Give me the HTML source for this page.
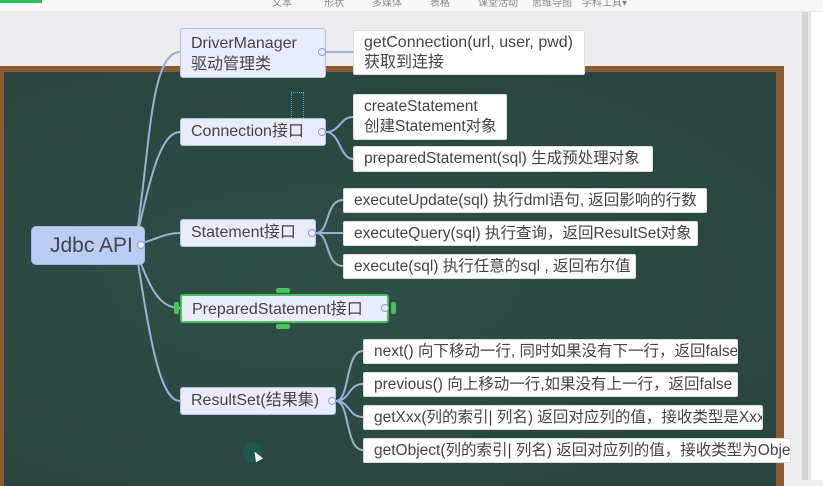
<!DOCTYPE html>
<html><head><meta charset="utf-8"><style>
*{margin:0;padding:0;box-sizing:border-box}
body{width:823px;height:480px;overflow:hidden;background:#ececee;position:relative;font-family:"Liberation Sans","Noto Sans CJK SC",sans-serif;color:#333}
.top{position:absolute;left:0;top:0;width:823px;height:11px;background:#f7f7f7}
.green{position:absolute;left:0;top:0;width:42px;height:3px;background:#2dbb55}
.top span{position:absolute;top:-6px;font-size:10px;color:#888}
.board{position:absolute;left:0;top:66px;width:784px;height:420px;background:#8a5a34;}
.inner{position:absolute;left:4px;top:6px;right:8px;bottom:0;background:radial-gradient(ellipse at 40% 50%,#2e4f47,#27443d);}
.scroll{position:absolute;left:802px;top:12px;width:6px;height:468px;background:#d4d4d4}
.right{position:absolute;left:810px;top:12px;width:13px;height:468px;background:#fff;border-left:1px solid #e4e4e4}
.n{position:absolute;font-size:16px;line-height:20px;white-space:nowrap;overflow:hidden}
.t{background:#e9edfb;border:1px solid #b3c0e4;border-radius:3px;color:#444;padding:4px 10px}
.w{background:#fff;border:1px solid #ddd;border-radius:2px;color:#444;padding:2px 10px;font-size:15.5px}
.dot{position:absolute;width:8px;height:8px;border-radius:50%;background:#e9edfb;border:1px solid #8e9fcc}
</style></head><body>
<div class="top"><div class="green"></div>
<span style="left:272px">文本</span><span style="left:324px">形状</span><span style="left:372px">多媒体</span><span style="left:430px">表格</span><span style="left:478px">课堂活动</span><span style="left:532px">思维导图</span><span style="left:582px">学科工具▾</span></div>
<div class="board"><div class="inner"></div></div>
<div class="scroll"></div><div class="right"></div>
<svg style="position:absolute;left:0;top:0" width="823" height="480" fill="none" stroke="#9db0d8" stroke-width="2">
<path d="M136 240 C150 150,150 52,180 52"/>
<path d="M136 240 C150 180,160 132,180 132"/>
<path d="M136 245 C160 238,165 233,180 233"/>
<path d="M136 250 C150 290,160 308,180 308"/>
<path d="M136 250 C150 340,160 401,180 401"/>
<path d="M326 52 L353 52"/>
<path d="M326 132 C340 132,340 117,353 117"/>
<path d="M326 132 C340 132,340 159,353 159"/>
<path d="M316 233 L343 233"/>
<path d="M316 233 C330 233,325 200,343 200"/>
<path d="M316 233 C330 233,325 266,343 266"/>
<path d="M336 401 C350 401,345 351,363 351"/>
<path d="M336 401 C350 401,348 384,363 384"/>
<path d="M336 401 C350 401,348 417,363 417"/>
<path d="M336 401 C350 401,345 450,363 450"/>
</svg>
<div style="position:absolute;left:291px;top:92px;width:13px;height:30px;border:1px dotted #4aa8c0"></div>
<div class="n t" style="left:31px;top:226px;width:114px;height:39px;background:#b9cdf5;border-color:#9fb6e6;font-size:21px;line-height:29px;padding:4px 0 0 18px;border-radius:5px">Jdbc API</div>
<div class="n t" style="left:180px;top:28px;width:146px;height:50px;line-height:21px">DriverManager<br>驱动管理类</div>
<div class="n t" style="left:180px;top:118px;width:146px;height:28px;padding-top:3px">Connection接口</div>
<div class="n t" style="left:180px;top:219px;width:136px;height:28px;padding-top:3px">Statement接口</div>
<div class="n t" style="left:180px;top:294px;width:209px;height:29px;padding-top:4px;border:2px solid #4cbf5e">PreparedStatement接口</div>
<div class="n t" style="left:180px;top:387px;width:156px;height:28px;padding-top:3px">ResultSet(结果集)</div>
<div class="n w" style="left:353px;top:30px;width:232px;height:45px;line-height:20px;font-size:16px">getConnection(url, user, pwd)<br>获取到连接</div>
<div class="n w" style="left:353px;top:94px;width:154px;height:46px;line-height:20px">createStatement<br>创建Statement对象</div>
<div class="n w" style="left:353px;top:146px;width:300px;height:26px">preparedStatement(sql) 生成预处理对象</div>
<div class="n w" style="left:343px;top:188px;width:364px;height:25px">executeUpdate(sql) 执行dml语句, 返回影响的行数</div>
<div class="n w" style="left:343px;top:221px;width:355px;height:25px">executeQuery(sql) 执行查询，返回ResultSet对象</div>
<div class="n w" style="left:343px;top:254px;width:293px;height:25px">execute(sql) 执行任意的sql , 返回布尔值</div>
<div class="n w" style="left:363px;top:339px;width:375px;height:25px">next() 向下移动一行, 同时如果没有下一行，返回false</div>
<div class="n w" style="left:363px;top:372px;width:375px;height:25px">previous() 向上移动一行,如果没有上一行，返回false</div>
<div class="n w" style="left:363px;top:405px;width:400px;height:25px">getXxx(列的索引| 列名) 返回对应列的值，接收类型是Xxx</div>
<div class="n w" style="left:363px;top:438px;width:428px;height:25px;padding-right:0">getObject(列的索引| 列名) 返回对应列的值，接收类型为Object</div>
<div class="dot" style="left:137px;top:241px"></div>
<div class="dot" style="left:318px;top:48px"></div>
<div class="dot" style="left:318px;top:128px"></div>
<div class="dot" style="left:308px;top:229px"></div>
<div class="dot" style="left:381px;top:304px"></div>
<div class="dot" style="left:328px;top:397px"></div>
<div style="position:absolute;left:276px;top:288px;width:14px;height:5px;background:#4cbf5e;border-radius:2px"></div>
<div style="position:absolute;left:276px;top:324px;width:14px;height:5px;background:#4cbf5e;border-radius:2px"></div>
<div style="position:absolute;left:174px;top:302px;width:5px;height:12px;background:#4cbf5e;border-radius:2px"></div>
<div style="position:absolute;left:391px;top:302px;width:5px;height:12px;background:#4cbf5e;border-radius:2px"></div>
<div style="position:absolute;left:243px;top:442px;width:20px;height:20px;border-radius:50%;background:#1f5a50"></div>
<div style="position:absolute;left:253px;top:451px;width:0;height:0;border-left:4px solid transparent;border-right:4px solid transparent;border-bottom:10px solid #fff;transform:rotate(-30deg)"></div>
</body></html>
